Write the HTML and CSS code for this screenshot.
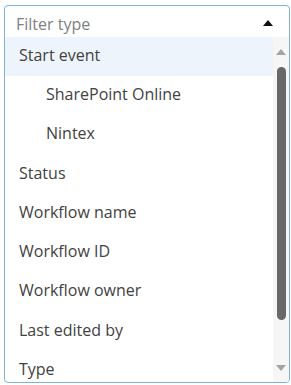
FILE: index.html
```html
<!DOCTYPE html>
<html>
<head>
<meta charset="utf-8">
<link rel="stylesheet" href="styles.css">
</head>
<body>
<div class="dropdown">
  <div class="header">
    <span class="placeholder">Filter type</span>
    <span class="caret"></span>
  </div>
  <div class="list">
    <div class="options">
      <div class="option active">Start event</div>
      <div class="option sub">SharePoint Online</div>
      <div class="option sub">Nintex</div>
      <div class="option">Status</div>
      <div class="option">Workflow name</div>
      <div class="option">Workflow ID</div>
      <div class="option">Workflow owner</div>
      <div class="option">Last edited by</div>
      <div class="option">Type</div>
    </div>
    <div class="scrollbar">
      <span class="arrow up"></span>
      <span class="thumb"></span>
      <span class="arrow down"></span>
    </div>
  </div>
</div>
</body>
</html>
```
FILE: styles.css
```css
html, body {
  margin: 0;
  padding: 0;
  background: #ffffff;
}
body {
  font-family: "Open Sans", "Noto Sans", sans-serif;
  font-size: 16px;
  color: #424242;
}
.dropdown {
  margin: 5px 0 0 4px;
  width: 286px;
  height: 378px;
  box-sizing: border-box;
  border: 1px solid #7fb0de;
  border-radius: 4px;
  overflow: hidden;
  display: flex;
  flex-direction: column;
}
.header {
  height: 31px;
  box-sizing: border-box;
  flex: none;
  display: flex;
  align-items: center;
  justify-content: space-between;
  padding: 4px 16px 0 11px;
}
.placeholder {
  color: #808080;
}
.caret {
  width: 0;
  height: 0;
  border-left: 5px solid transparent;
  border-right: 5px solid transparent;
  border-bottom: 6px solid #111111;
  margin-top: -2px;
}
.list {
  flex: 1;
  display: flex;
  min-height: 0;
}
.options {
  flex: 1;
  overflow: hidden;
}
.option {
  height: 39.3px;
  box-sizing: border-box;
  display: flex;
  align-items: center;
  padding: 0 0 4px 14px;
  white-space: nowrap;
}
.option.active {
  background: #eef4fb;
}
.option.sub {
  padding-left: 41px;
}
.scrollbar {
  width: 16px;
  flex: none;
  background: #f6f6f6;
  display: flex;
  flex-direction: column;
  align-items: center;
}
.arrow {
  width: 0;
  height: 0;
  border-left: 5px solid transparent;
  border-right: 5px solid transparent;
}
.arrow.up {
  border-bottom: 6px solid #a3a3a3;
  margin-top: 12px;
}
.arrow.down {
  border-top: 6px solid #a3a3a3;
  margin-top: 45px;
}
.thumb {
  width: 9px;
  height: 253px;
  margin-top: 12px;
  margin-left: 1px;
  border-radius: 5px;
  background: #686868;
}
```
